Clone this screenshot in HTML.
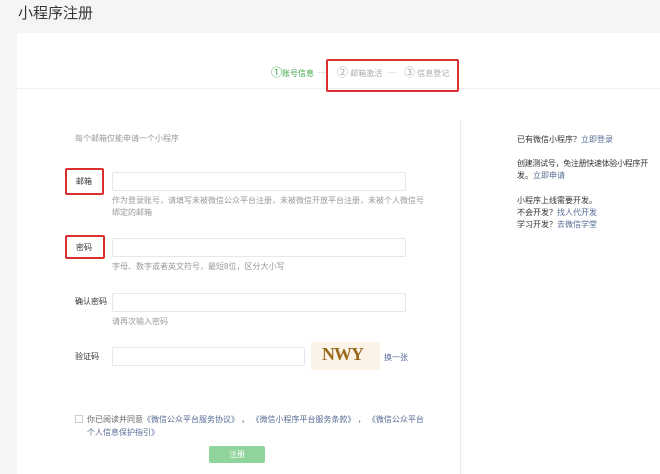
<!DOCTYPE html>
<html><head><meta charset="utf-8"><style>
*{margin:0;padding:0;box-sizing:border-box}
body{width:660px;height:474px;overflow:hidden;background:#f4f5f7;font-family:"Liberation Sans","Noto Sans CJK SC",sans-serif;position:relative;color:#333}
.a{position:absolute;white-space:nowrap}
.s{font-size:8px;color:#999}
.l{font-size:8px;color:#333}
.in{position:absolute;border:1px solid #e4e6ea;background:#fff;border-radius:2px}
.red{position:absolute;border:2px solid #d9302d;border-radius:2px}
.lk{color:#576b95}
.st{position:absolute;top:66px;font-size:8px;white-space:nowrap;line-height:14px}
</style></head><body>
<div class="a" style="left:18px;top:2px;font-size:15px;color:#353535">小程序注册</div>
<div style="position:absolute;left:17px;top:33px;width:643px;height:441px;background:#fff"></div>
<div style="position:absolute;left:17px;top:88px;width:643px;height:1px;background:#eef0f2"></div>
<div style="position:absolute;left:460px;top:120px;width:1px;height:354px;background:#e8eaed"></div>
<div class="st" style="left:271px;color:#3aa645"><span style="font-size:11px">①</span>账号信息</div>
<div class="st" style="left:318px;color:#ccc">—</div>
<div class="st" style="left:337px;color:#aaa"><span style="font-size:11px">②</span> 邮箱激活</div>
<div class="st" style="left:388px;color:#ccc">—</div>
<div class="st" style="left:404px;color:#aaa"><span style="font-size:11px">③</span> 信息登记</div>
<div class="red" style="left:326px;top:59px;width:133px;height:33px"></div>
<div class="a s" style="left:75px;top:133px">每个邮箱仅能申请一个小程序</div>
<div class="red" style="left:65px;top:168px;width:39px;height:27px"></div>
<div class="a l" style="left:76px;top:176px">邮箱</div>
<div class="in" style="left:112px;top:172px;width:294px;height:19px"></div>
<div class="a s" style="left:112px;top:195px">作为登录账号，请填写未被微信公众平台注册，未被微信开放平台注册，未被个人微信号</div>
<div class="a s" style="left:112px;top:207px">绑定的邮箱</div>
<div class="red" style="left:65px;top:235px;width:40px;height:24px"></div>
<div class="a l" style="left:76px;top:242px">密码</div>
<div class="in" style="left:112px;top:238px;width:294px;height:19px"></div>
<div class="a s" style="left:112px;top:261px">字母、数字或者英文符号，最短8位，区分大小写</div>
<div class="a l" style="left:75px;top:296px">确认密码</div>
<div class="in" style="left:112px;top:293px;width:294px;height:19px"></div>
<div class="a s" style="left:112px;top:316px">请再次输入密码</div>
<div class="a l" style="left:75px;top:351px">验证码</div>
<div class="in" style="left:112px;top:347px;width:193px;height:19px"></div>
<div style="position:absolute;left:311px;top:342px;width:69px;height:28px;background:#fbf3e8"></div>
<div class="a" style="left:322px;top:344px;font-size:18px;font-weight:bold;color:#9a6a1c;font-family:'Liberation Serif',serif;letter-spacing:-1px">NWY</div>
<div class="a" style="left:384px;top:352px;font-size:8px"><span class="lk">换一张</span></div>
<div style="position:absolute;left:75px;top:415px;width:8px;height:8px;border:1px solid #ccc"></div>
<div class="a" style="left:87px;top:414px;font-size:8px;color:#666">你已阅读并同意<span class="lk">《微信公众平台服务协议》</span> ， <span class="lk">《微信小程序平台服务条款》</span> ， <span class="lk">《微信公众平台</span></div>
<div class="a" style="left:87px;top:427px;font-size:8px"><span class="lk">个人信息保护指引》</span></div>
<div style="position:absolute;left:209px;top:446px;width:56px;height:17px;background:#8fd49b;border-radius:2px;color:#fff;font-size:8px;text-align:center;line-height:17px">注册</div>
<div class="a l" style="left:517px;top:134px">已有微信小程序？<span class="lk">立即登录</span></div>
<div class="a l" style="left:517px;top:158px;letter-spacing:-0.3px">创建测试号，免注册快速体验小程序开</div>
<div class="a l" style="left:517px;top:170px">发。<span class="lk">立即申请</span></div>
<div class="a l" style="left:517px;top:195px">小程序上线需要开发。</div>
<div class="a l" style="left:517px;top:207px">不会开发？<span class="lk">找人代开发</span></div>
<div class="a l" style="left:517px;top:219px">学习开发？<span class="lk">去微信学堂</span></div>
</body></html>
